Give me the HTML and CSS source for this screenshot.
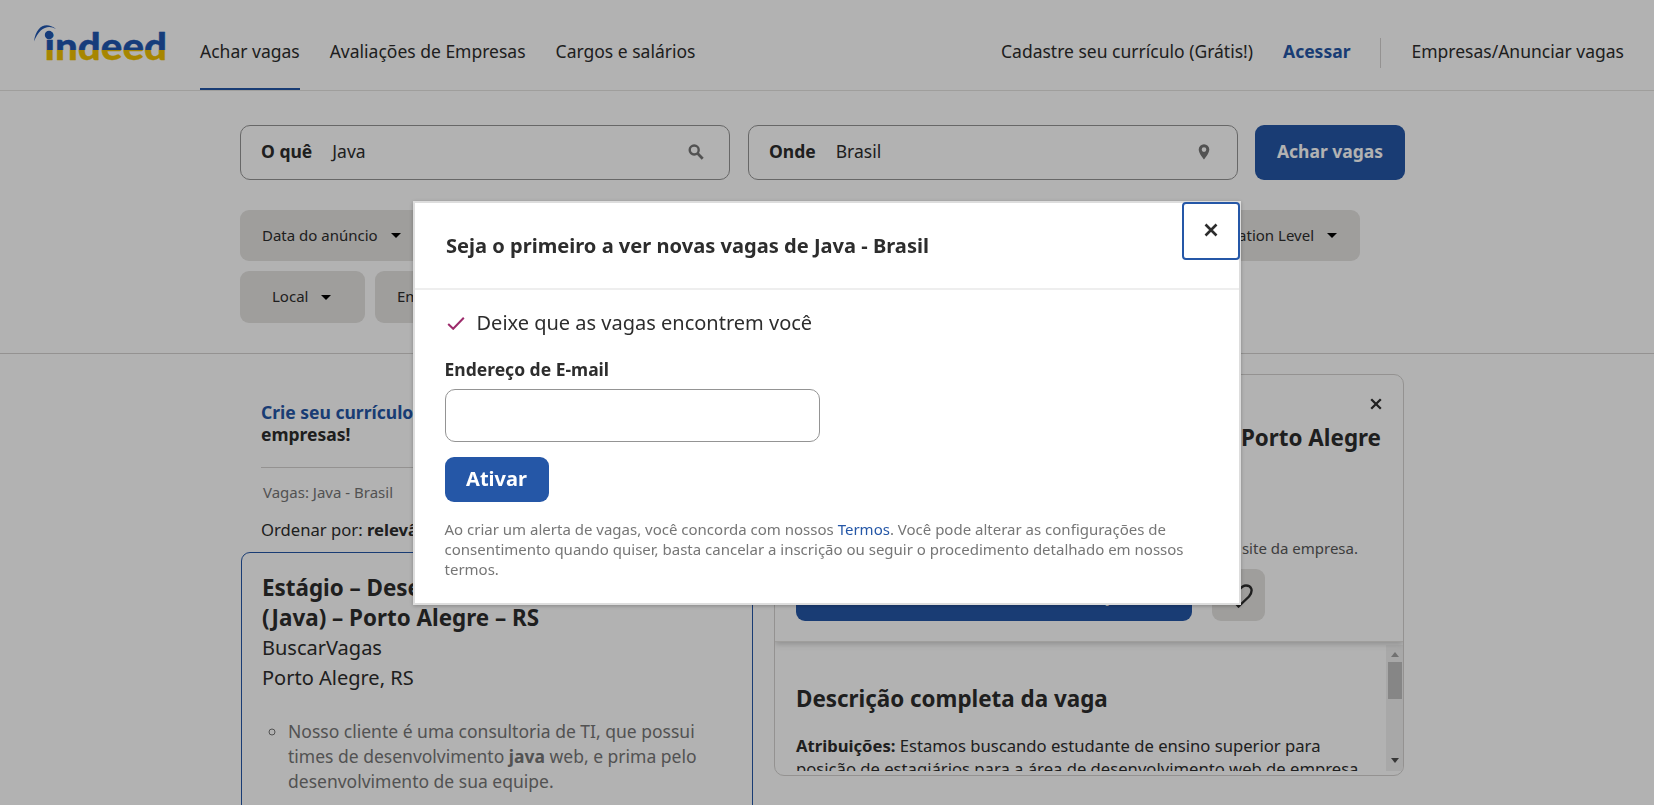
FILE: index.html
```html
<!DOCTYPE html>
<html lang="pt-BR">
<head>
<meta charset="utf-8">
<title>Vagas: Java - Brasil | Indeed</title>
<link rel="stylesheet" href="styles.css">
</head>
<body>
<div class="page">
  <header class="header">
    <svg class="logo" width="140" height="50" viewBox="0 0 140 50" role="img" aria-label="indeed">
      <defs>
        <linearGradient id="brand" gradientUnits="userSpaceOnUse" x1="0" y1="0" x2="0" y2="50">
          <stop offset="0.59" stop-color="#2056b0"/>
          <stop offset="0.59" stop-color="#f0c000"/>
        </linearGradient>
      </defs>
      <path d="M0 21.500C2 6 12 1 22 9C14 4 5 8 0 21.500Z" fill="#2056b0"/>
      <text class="logo-text" x="10.500" y="39.500" textLength="122.500" lengthAdjust="spacingAndGlyphs" fill="url(#brand)" stroke="url(#brand)">indeed</text>
      <circle cx="15" cy="15" r="4.200" fill="#2056b0"/>
    </svg>
    <nav class="nav">
      <a class="nav-link active">Achar vagas</a>
      <a class="nav-link">Avaliações de Empresas</a>
      <a class="nav-link">Cargos e salários</a>
    </nav>
    <nav class="nav nav-right">
      <a class="nav-link">Cadastre seu currículo (Grátis!)</a>
      <a class="nav-link signin">Acessar</a>
      <span class="divider"></span>
      <a class="nav-link">Empresas/Anunciar vagas</a>
    </nav>
  </header>

  <section class="search-area">
    <form class="search">
      <div class="field"><b>O quê</b><span>Java</span>
        <svg class="field-icon" width="16" height="16" viewBox="0 0 16 16"><circle cx="6.200" cy="6" r="4.500" fill="none" stroke="#767676" stroke-width="2.400"/><path d="M9.200 9l5.500 5.800" stroke="#767676" stroke-width="2.700"/></svg>
      </div>
      <div class="field"><b>Onde</b><span>Brasil</span>
        <svg class="field-icon" width="16" height="16" viewBox="0 0 16 16"><path fill="#767676" fill-rule="evenodd" d="M8 0.300a5.300 5.300 0 0 0-5.300 5.300C2.700 9.500 8 15.600 8 15.600s5.300-6.100 5.300-10A5.300 5.300 0 0 0 8 .3zm0 3a2.300 2.300 0 1 1 0 4.600 2.300 2.300 0 0 1 0-4.600z"/></svg>
      </div>
      <button class="btn search-btn" type="button">Achar vagas</button>
    </form>
    <div class="filters">
      <div class="filter-row spread">
        <span class="chip">Data do anúncio<i class="caret"></i></span>
        <span class="chip">Education Level<i class="caret"></i></span>
      </div>
      <div class="filter-row">
        <span class="chip tall local">Local<i class="caret"></i></span>
        <span class="chip tall">Empresa<i class="caret"></i></span>
      </div>
    </div>
  </section>

  <main class="results">
    <section class="list">
      <p class="promo"><a>Crie seu currículo</a> - Seja visto pelas<br>empresas!</p>
      <p class="crumb">Vagas: Java - Brasil</p>
      <p class="sort">Ordenar por: <b>relevância</b></p>
      <article class="job">
        <h2>Estágio – Desenvolvimento Web<br>(Java) – Porto Alegre – RS</h2>
        <p class="company">BuscarVagas</p>
        <p class="company">Porto Alegre, RS</p>
        <ul class="snippet">
          <li>Nosso cliente é uma consultoria de TI, que possui times de desenvolvimento <b>java</b> web, e prima pelo desenvolvimento de sua equipe.</li>
        </ul>
      </article>
    </section>
    <aside class="detail">
      <div class="detail-head">
        <svg class="detail-close" width="12" height="12" viewBox="0 0 12 12"><path d="M1.200 1.200l9.600 9.600M10.800 1.200l-9.600 9.600" stroke="#2d2d2d" stroke-width="2.300"/></svg>
        <h2>Estágio – Desenvolvimento (Java) – Porto Alegre</h2>
        <p class="apply-note">É preciso se candidatar no site da empresa.</p>
        <div class="actions">
          <button class="btn apply" type="button">Candidatar-se no site da empresa</button>
          <span class="save"><svg width="30" height="26" viewBox="0 0 30 26"><path d="M14.500 24.500L5 14C0 8 3 3.500 8 3.500c3 0 5 2 7 4.500 2-2.500 4-4.500 7-4.500 5 0 8 4.500 3 11Z" fill="none" stroke="#2d2d2d" stroke-width="2.400"/></svg></span>
        </div>
      </div>
      <div class="detail-body">
        <div class="description">
          <h2>Descrição completa da vaga</h2>
          <p><b>Atribuições:</b> Estamos buscando estudante de ensino superior para posição de estagiários para a área de desenvolvimento web de empresa</p>
        </div>
        <div class="scrollbar"><i class="arrow-up"></i><i class="thumb"></i><i class="arrow-down"></i></div>
      </div>
    </aside>
  </main>
</div>

<div class="overlay">
  <div class="modal" role="dialog">
    <button class="close" type="button" aria-label="Fechar"><svg width="14" height="14" viewBox="0 0 14 14"><path d="M1.500 1.500l11 11M12.500 1.500l-11 11" stroke="#2d2d2d" stroke-width="2.600"/></svg></button>
    <h1 class="modal-title">Seja o primeiro a ver novas vagas de Java - Brasil</h1>
    <div class="modal-body">
      <p class="benefit"><svg width="18" height="14" viewBox="0 0 18 14"><path d="M1.200 8l5 4.800L16.800 1.700" fill="none" stroke="#9d2b6b" stroke-width="2"/></svg>Deixe que as vagas encontrem você</p>
      <label class="label">Endereço de E-mail</label>
      <div class="input"></div>
      <button class="btn activate" type="button">Ativar</button>
      <p class="legal">Ao criar um alerta de vagas, você concorda com nossos <a>Termos</a>. Você pode alterar as configurações de consentimento quando quiser, basta cancelar a inscrição ou seguir o procedimento detalhado em nossos termos.</p>
    </div>
  </div>
</div>
</body>
</html>
```
FILE: styles.css
```css
* { box-sizing: border-box; }
html, body { height: 100%; }
body {
  margin: 0;
  overflow: hidden;
  background: #fff;
  color: #2d2d2d;
  font-family: "Noto Sans", sans-serif;
  font-size: 17.5px;
  line-height: 24px;
}
h1, h2, p, ul { margin: 0; padding: 0; }
.page { height: 805px; overflow: hidden; }

.header {
  display: flex;
  height: 91px;
  padding: 0 30px 0 34px;
  border-bottom: 1px solid #e4e2e0;
}
.logo { margin: 20px 26px 0 0; flex: none; }
.logo-text { font-family: Lato, sans-serif; font-size: 38px; font-weight: 900; stroke-width: .3; stroke-linejoin: round; }
.nav { display: flex; gap: 30px; white-space: nowrap; }
.nav-right { margin-left: auto; }
.nav-link { height: 90px; padding-top: 39px; }
.active { border-bottom: 2px solid #2557a7; }
.signin { color: #2557a7; font-weight: 700; }
.divider { width: 1px; height: 30px; margin-top: 38px; background: #d4d2d0; }

.search-area { height: 263px; padding: 34px 0 0 240px; border-bottom: 1px solid #d4d2d0; }
.search { display: flex; gap: 18px; }
.field {
  display: flex;
  align-items: center;
  gap: 20px;
  width: 490px;
  height: 55px;
  padding: 0 25px 3px 20px;
  border: 1px solid #949494;
  border-radius: 10px;
}
.field-icon { margin-left: auto; position: relative; top: 1px; }
.btn {
  border: 0;
  border-radius: 9px;
  background: #2557a7;
  color: #fff;
  font: 700 17.5px/24px "Noto Sans", sans-serif;
}
.search-btn { width: 150px; height: 55px; margin-left: -1px; padding: 0 0 3px; }
.filters { margin-top: 30px; }
.filter-row { display: flex; gap: 10px; margin-bottom: 10px; }
.spread { width: 1120px; justify-content: space-between; }
.chip {
  display: flex;
  align-items: center;
  gap: 13px;
  height: 51px;
  padding: 0 23px 2px 22px;
  border-radius: 9px;
  background: #e4e2e0;
  font-size: 15px;
}
.tall { height: 52px; }
.local { width: 125px; padding-left: 32px; }
.caret { margin-top: 2px; border: 5px solid transparent; border-top-color: #000; border-bottom: 0; }

.results { display: flex; gap: 21px; padding: 20px 0 0 241px; }
.list { width: 512px; flex: none; padding-top: 27px; }
.promo { width: 470px; margin-left: 20px; padding-bottom: 22px; border-bottom: 1px solid #d4d2d0; line-height: 22px; font-weight: 700; }
.promo a { color: #2557a7; }
.crumb { margin: 12px 0 0 22px; color: #767676; font-size: 15px; }
.sort { margin: 14px 0 10px 20px; font-size: 16.65px; }
.job { height: 320px; padding: 20px 20px; border: 1px solid #2557a7; border-radius: 9px; }
.job h2 { font-size: 22.400px; line-height: 30px; }
.company { font-size: 20px; line-height: 30px; }
.snippet { margin-top: 26px; padding-left: 26px; list-style: circle; color: #767676; line-height: 25px; }

.detail { display: flex; flex-direction: column; width: 630px; height: 402px; border: 1px solid #d4d2d0; border-radius: 10px; overflow: hidden; }
.detail-head { position: relative; height: 267px; flex: none; padding: 48px 22px 0 21px; box-shadow: 0 2px 6px #ccc; border-bottom: 1px solid #e4e2e0; text-align: right; }
.detail-close { position: absolute; right: 21px; top: 23px; }
.detail h2 { font-size: 22.400px; line-height: 30px; white-space: nowrap; }
.apply-note { margin: 83px 23px 0 0; color: #595959; font-size: 15px; }
.actions { display: flex; gap: 20px; margin-top: 9px; }
.apply { width: 396px; height: 52px; padding: 0 0 0 26px; }
.save { display: flex; align-items: center; justify-content: center; width: 53px; height: 52px; border-radius: 9px; background: #e4e2e0; }
.detail-body { display: flex; height: 126px; margin-top: 3px; overflow: hidden; }
.description { width: 611px; flex: none; padding: 39px 20px 0 21px; }
.description p { margin-top: 20px; font-size: 16.65px; line-height: 23px; }
.scrollbar { display: flex; flex-direction: column; align-items: center; width: 18px; height: 126px; padding: 7px 0 8px; background: #f1f1f1; }
.arrow-up { border: 4px solid transparent; border-bottom: 5px solid #a3a3a3; border-top: 0; }
.thumb { width: 14px; height: 37px; margin-top: 5px; background: #c1c1c1; }
.arrow-down { margin-top: auto; border: 4px solid transparent; border-top: 5px solid #505050; border-bottom: 0; }

.overlay { position: fixed; inset: 0; display: flex; justify-content: center; align-items: flex-start; padding-top: 201px; background: rgba(0, 0, 0, .3); }
.modal { position: relative; width: 828px; height: 404px; border: 2px solid #ddd; background: #fff; box-shadow: 0 1px 4px rgba(0, 0, 0, .25); }
.close { position: absolute; top: -1px; right: -0.500px; display: flex; align-items: center; justify-content: center; width: 58px; height: 58px; padding: 0 0 2px; border: 2px solid #2557a7; border-radius: 4px; background: #fff; }
.modal-title { height: 87px; padding: 27px 0 0 31px; border-bottom: 2px solid #eee; font-size: 20.080px; line-height: 32px; }
.modal-body { padding: 19px 30px 0 29.5px; }
.benefit { display: flex; align-items: center; gap: 12px; padding-left: 2px; font-size: 20px; line-height: 28px; }
.label { display: block; margin-top: 20px; font-weight: 700; line-height: 24px; }
.input { width: 375px; height: 53px; margin-top: 8px; border: 1px solid #949494; border-radius: 10px; }
.activate { display: block; width: 104px; height: 45px; margin-top: 15px; padding: 0 0 2px; font-size: 20px; }
.legal { margin-top: 17px; color: #767676; font-size: 15px; line-height: 20px; }
.legal a { color: #2557a7; }
```
